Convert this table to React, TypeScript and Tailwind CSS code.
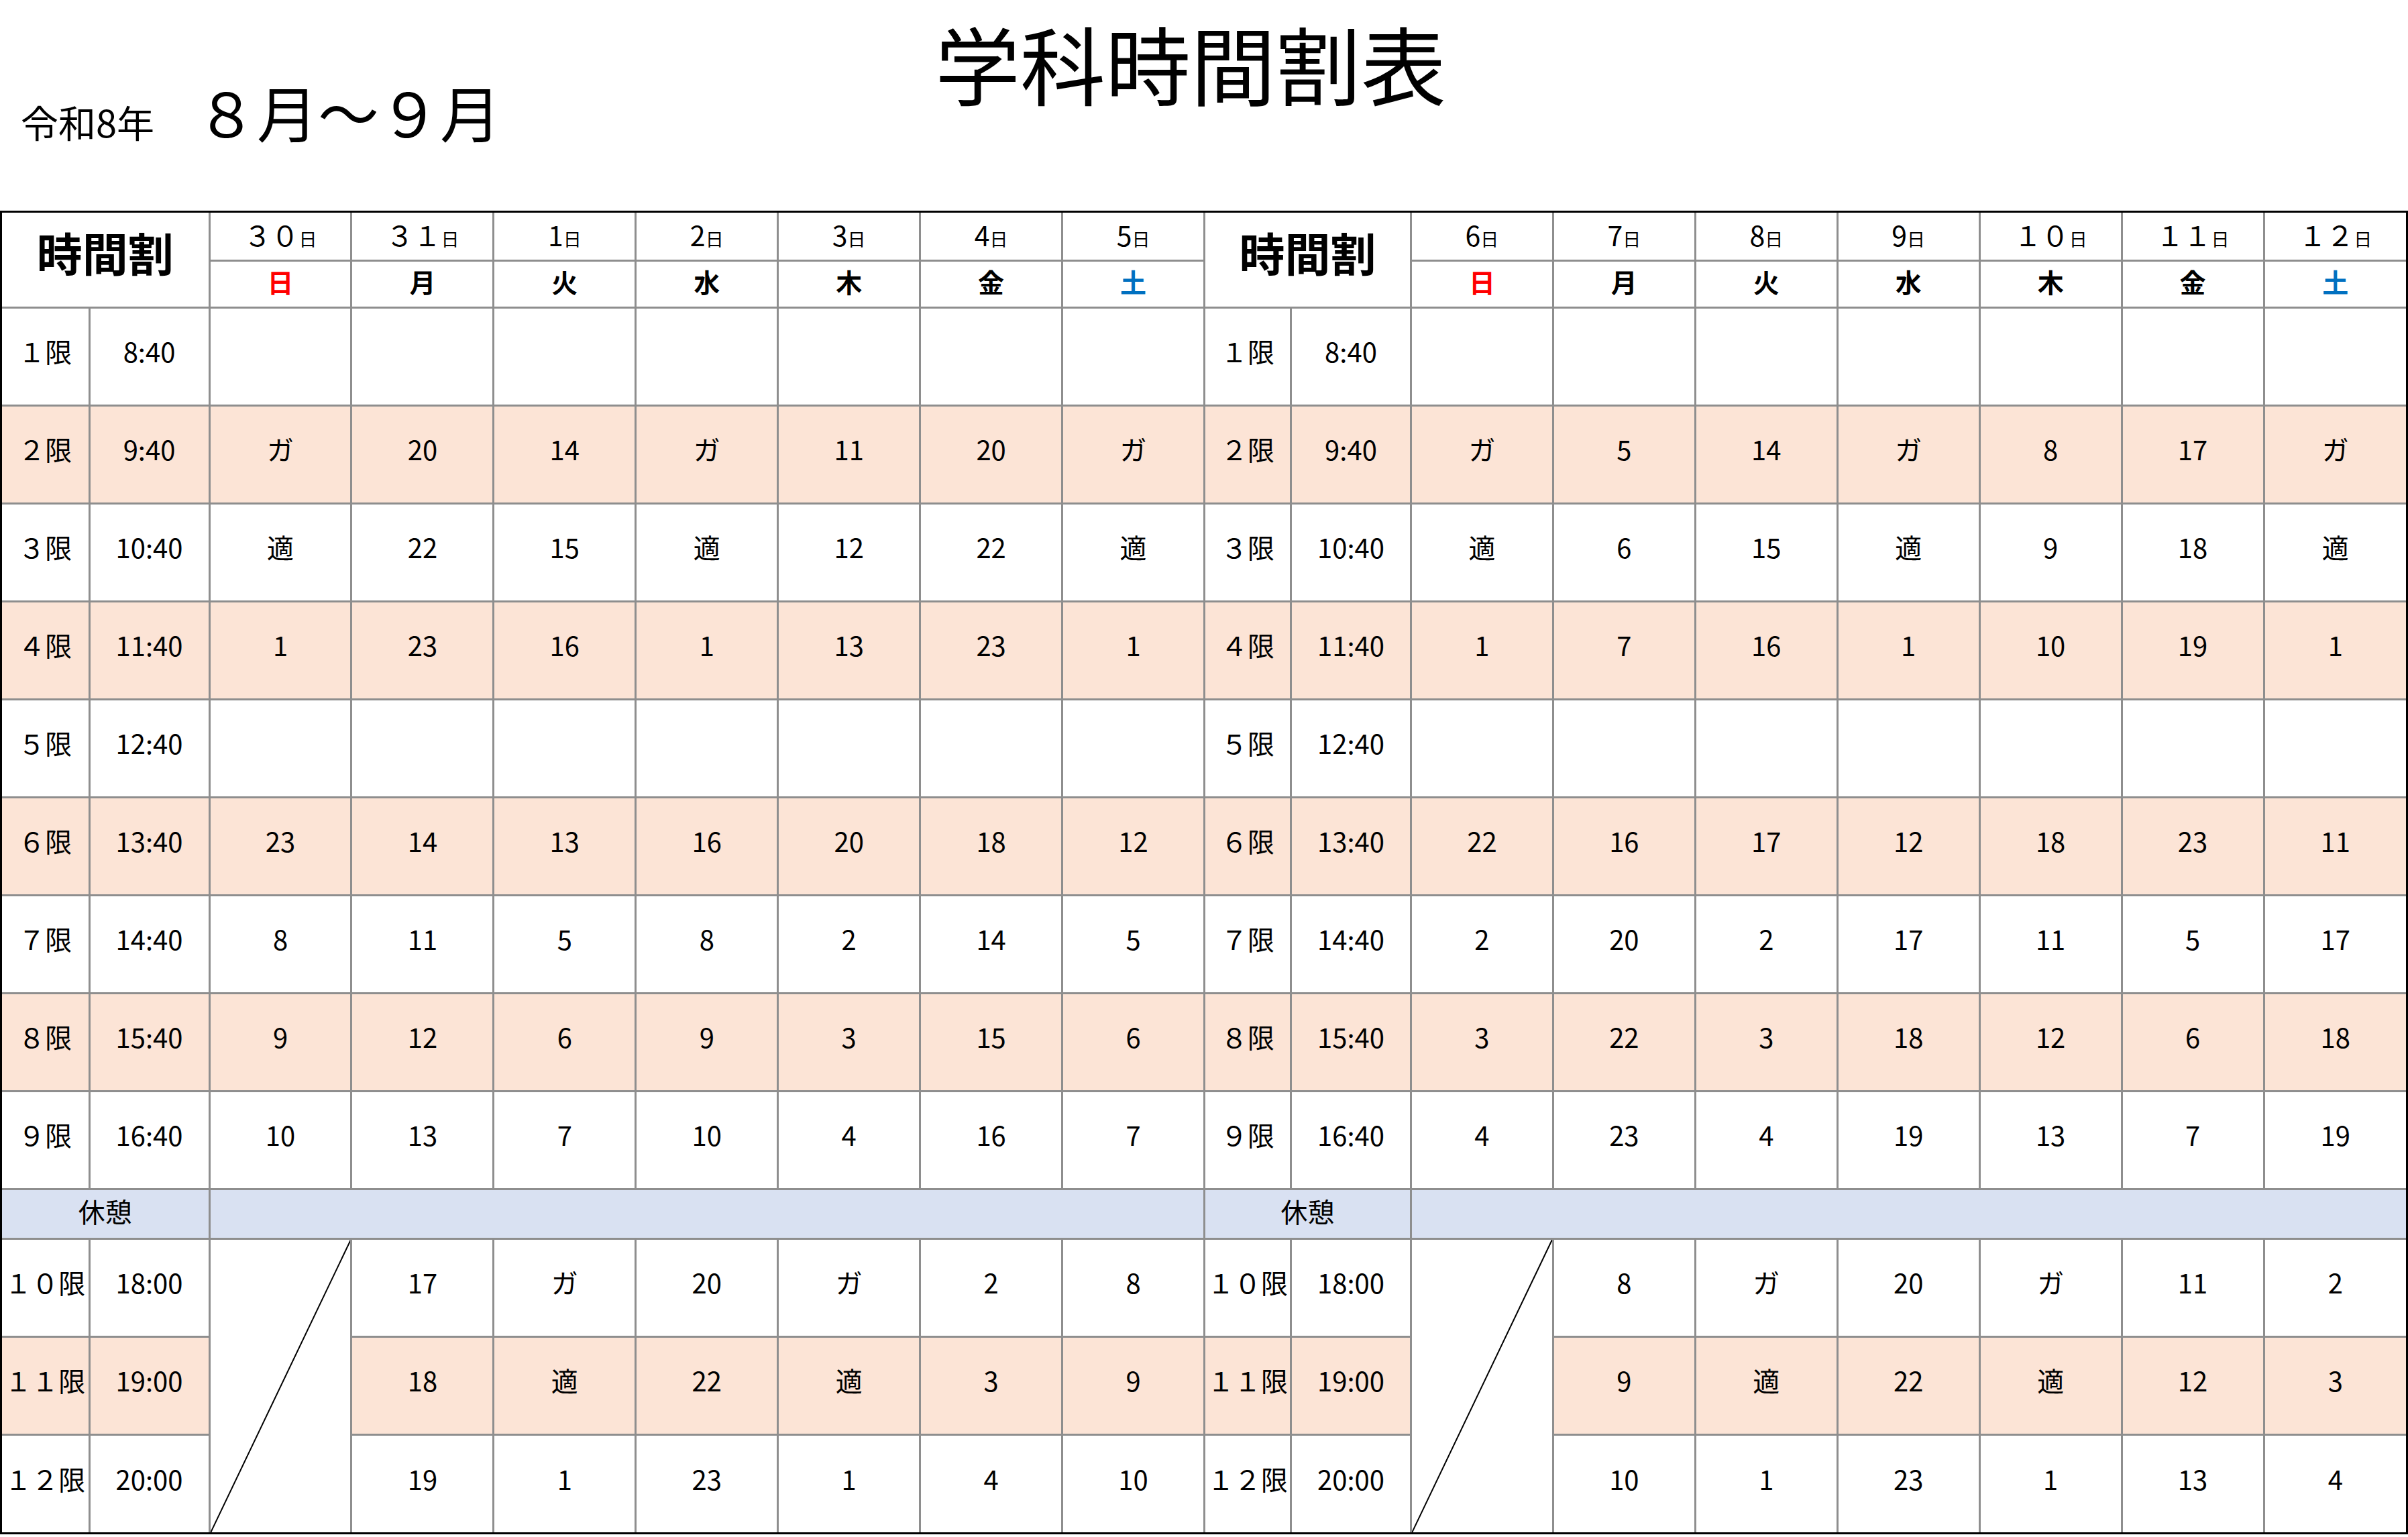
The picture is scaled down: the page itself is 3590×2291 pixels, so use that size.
import React from 'react';

type Day = { d: string; w: string };

const leftDays: Day[] = [
  { d: '３０', w: '日' },
  { d: '３１', w: '月' },
  { d: '1', w: '火' },
  { d: '2', w: '水' },
  { d: '3', w: '木' },
  { d: '4', w: '金' },
  { d: '5', w: '土' },
];

const rightDays: Day[] = [
  { d: '6', w: '日' },
  { d: '7', w: '月' },
  { d: '8', w: '火' },
  { d: '9', w: '水' },
  { d: '１０', w: '木' },
  { d: '１１', w: '金' },
  { d: '１２', w: '土' },
];

const periods = [
  { label: '１限', time: '8:40' },
  { label: '２限', time: '9:40' },
  { label: '３限', time: '10:40' },
  { label: '４限', time: '11:40' },
  { label: '５限', time: '12:40' },
  { label: '６限', time: '13:40' },
  { label: '７限', time: '14:40' },
  { label: '８限', time: '15:40' },
  { label: '９限', time: '16:40' },
];

const evening = [
  { label: '１０限', time: '18:00' },
  { label: '１１限', time: '19:00' },
  { label: '１２限', time: '20:00' },
];

const leftRows: string[][] = [
  ['', '', '', '', '', '', ''],
  ['ガ', '20', '14', 'ガ', '11', '20', 'ガ'],
  ['適', '22', '15', '適', '12', '22', '適'],
  ['1', '23', '16', '1', '13', '23', '1'],
  ['', '', '', '', '', '', ''],
  ['23', '14', '13', '16', '20', '18', '12'],
  ['8', '11', '5', '8', '2', '14', '5'],
  ['9', '12', '6', '9', '3', '15', '6'],
  ['10', '13', '7', '10', '4', '16', '7'],
];

const rightRows: string[][] = [
  ['', '', '', '', '', '', ''],
  ['ガ', '5', '14', 'ガ', '8', '17', 'ガ'],
  ['適', '6', '15', '適', '9', '18', '適'],
  ['1', '7', '16', '1', '10', '19', '1'],
  ['', '', '', '', '', '', ''],
  ['22', '16', '17', '12', '18', '23', '11'],
  ['2', '20', '2', '17', '11', '5', '17'],
  ['3', '22', '3', '18', '12', '6', '18'],
  ['4', '23', '4', '19', '13', '7', '19'],
];

// evening rows: the first day column is merged (diagonal), so 6 values each
const leftEvening: string[][] = [
  ['17', 'ガ', '20', 'ガ', '2', '8'],
  ['18', '適', '22', '適', '3', '9'],
  ['19', '1', '23', '1', '4', '10'],
];

const rightEvening: string[][] = [
  ['8', 'ガ', '20', 'ガ', '11', '2'],
  ['9', '適', '22', '適', '12', '3'],
  ['10', '1', '23', '1', '13', '4'],
];

const cell = 'border-[3px] border-[#8e8e8e] text-center align-middle p-0 whitespace-nowrap';
const body = `${cell} pb-[16px]`;

const weekColor = (w: string) =>
  w === '日' ? 'text-[#ff0000]' : w === '土' ? 'text-[#0070c0]' : 'text-black';

const Diagonal: React.FC = () => (
  <svg className="absolute inset-0 w-full h-full" preserveAspectRatio="none">
    <line x1="0" y1="100%" x2="100%" y2="0" stroke="#000" strokeWidth="2" />
  </svg>
);

const DateCells: React.FC<{ days: Day[] }> = ({ days }) => (
  <>
    {days.map((day, i) => (
      <th key={i} className={`${cell} align-bottom pb-[5px] font-normal leading-none`}>
        <span className="text-[41px]">{day.d}</span>
        <span className="text-[27px]">日</span>
      </th>
    ))}
  </>
);

const WeekCells: React.FC<{ days: Day[] }> = ({ days }) => (
  <>
    {days.map((day, i) => (
      <th key={i} className={`${cell} pb-[8px] text-[39px] font-bold leading-none ${weekColor(day.w)}`}>
        {day.w}
      </th>
    ))}
  </>
);

const Cols: React.FC = () => (
  <>
    <col className="w-[130px]" />
    <col className="w-[179px]" />
    {Array.from({ length: 7 }).map((_, i) => (
      <col key={`a${i}`} />
    ))}
    <col className="w-[129px]" />
    <col className="w-[179px]" />
    {Array.from({ length: 7 }).map((_, i) => (
      <col key={`b${i}`} />
    ))}
  </>
);

export default function App() {
  return (
    <div className="w-[3590px] h-[2291px] bg-white text-black font-['Noto_Sans_CJK_JP','Noto_Sans',sans-serif]">
      {/* title area */}
      <div className="h-[314px] grid grid-cols-[1fr_auto_1fr]">
        <div className="flex items-baseline pl-[31px] pt-[120px]">
          <span className="text-[56px] leading-none">令和8年</span>
          <span className="text-[91px] leading-none ml-[62px]">８月～９月</span>
        </div>
        <div className="pt-[30px] pr-[40px]">
          <h1 className="text-[127px] leading-none font-normal">学科時間割表</h1>
        </div>
        <div />
      </div>

      {/* timetable */}
      <div className="border-[3px] border-black">
        <table className="w-full table-fixed border-collapse border-hidden text-[40px] leading-none">
          <colgroup>
            <Cols />
          </colgroup>
          <thead>
            <tr className="h-[71px]">
              <th rowSpan={2} colSpan={2} className={`${cell} text-[68px] font-bold pb-[22px]`}>
                時間割
              </th>
              <DateCells days={leftDays} />
              <th rowSpan={2} colSpan={2} className={`${cell} text-[68px] font-bold pb-[22px]`}>
                時間割
              </th>
              <DateCells days={rightDays} />
            </tr>
            <tr className="h-[70px]">
              <WeekCells days={leftDays} />
              <WeekCells days={rightDays} />
            </tr>
          </thead>
          <tbody>
            {periods.map((p, r) => {
              const fill = r % 2 === 1 ? 'bg-[#fce4d6]' : '';
              return (
                <tr key={p.label} className={`h-[146px] ${fill}`}>
                  <td className={body}>{p.label}</td>
                  <td className={body}>{p.time}</td>
                  {leftRows[r].map((v, i) => (
                    <td key={`l${i}`} className={body}>
                      {v}
                    </td>
                  ))}
                  <td className={body}>{p.label}</td>
                  <td className={body}>{p.time}</td>
                  {rightRows[r].map((v, i) => (
                    <td key={`r${i}`} className={body}>
                      {v}
                    </td>
                  ))}
                </tr>
              );
            })}

            <tr className="h-[74px] bg-[#d9e1f2]">
              <td colSpan={2} className={`${cell} pb-[8px]`}>
                休憩
              </td>
              <td colSpan={7} className={cell} />
              <td colSpan={2} className={`${cell} pb-[8px]`}>
                休憩
              </td>
              <td colSpan={7} className={cell} />
            </tr>

            {evening.map((p, r) => {
              const fill = r === 1 ? 'bg-[#fce4d6]' : '';
              return (
                <tr key={p.label} className="h-[146px]">
                  <td className={`${body} ${fill}`}>{p.label}</td>
                  <td className={`${body} ${fill}`}>{p.time}</td>
                  {r === 0 && (
                    <td rowSpan={3} className={`${cell} relative bg-white`}>
                      <Diagonal />
                    </td>
                  )}
                  {leftEvening[r].map((v, i) => (
                    <td key={`l${i}`} className={`${body} ${fill}`}>
                      {v}
                    </td>
                  ))}
                  <td className={`${body} ${fill}`}>{p.label}</td>
                  <td className={`${body} ${fill}`}>{p.time}</td>
                  {r === 0 && (
                    <td rowSpan={3} className={`${cell} relative bg-white`}>
                      <Diagonal />
                    </td>
                  )}
                  {rightEvening[r].map((v, i) => (
                    <td key={`r${i}`} className={`${body} ${fill}`}>
                      {v}
                    </td>
                  ))}
                </tr>
              );
            })}
          </tbody>
        </table>
      </div>
    </div>
  );
}
